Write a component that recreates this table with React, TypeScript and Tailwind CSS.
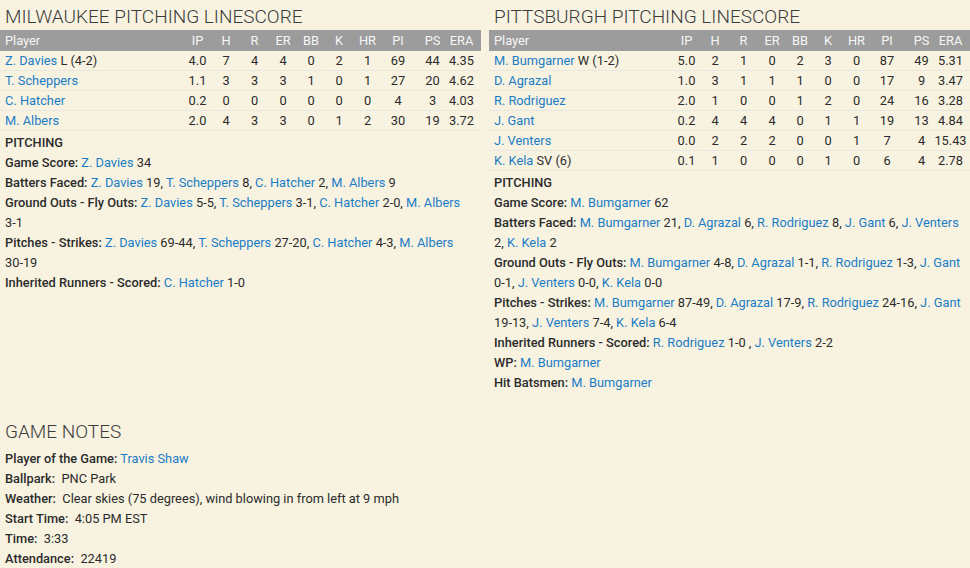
// Box score: pitching linescores + game notes
import React from "react";

type Pitcher = { name: string; note?: string; stats: string[] };
type Item = [string, string];

const COLS = ["IP", "H", "R", "ER", "BB", "K", "HR", "PI", "PS", "ERA"];
const GRID = "grid grid-cols-[183px_29px_28px_29px_28px_28px_28px_29px_32px_37px_21px]";

const MIL: Pitcher[] = [
  { name: "Z. Davies", note: "L (4-2)", stats: ["4.0", "7", "4", "4", "0", "2", "1", "69", "44", "4.35"] },
  { name: "T. Scheppers", stats: ["1.1", "3", "3", "3", "1", "0", "1", "27", "20", "4.62"] },
  { name: "C. Hatcher", stats: ["0.2", "0", "0", "0", "0", "0", "0", "4", "3", "4.03"] },
  { name: "M. Albers", stats: ["2.0", "4", "3", "3", "0", "1", "2", "30", "19", "3.72"] },
];

const PIT: Pitcher[] = [
  { name: "M. Bumgarner", note: "W (1-2)", stats: ["5.0", "2", "1", "0", "2", "3", "0", "87", "49", "5.31"] },
  { name: "D. Agrazal", stats: ["1.0", "3", "1", "1", "1", "0", "0", "17", "9", "3.47"] },
  { name: "R. Rodriguez", stats: ["2.0", "1", "0", "0", "1", "2", "0", "24", "16", "3.28"] },
  { name: "J. Gant", stats: ["0.2", "4", "4", "4", "0", "1", "1", "19", "13", "4.84"] },
  { name: "J. Venters", stats: ["0.0", "2", "2", "2", "0", "0", "1", "7", "4", "15.43"] },
  { name: "K. Kela", note: "SV (6)", stats: ["0.1", "1", "0", "0", "0", "1", "0", "6", "4", "2.78"] },
];

const MIL_NOTES: [string, Item[], string?][] = [
  ["Game Score:", [["Z. Davies", "34"]]],
  ["Batters Faced:", [["Z. Davies", "19"], ["T. Scheppers", "8"], ["C. Hatcher", "2"], ["M. Albers", "9"]]],
  ["Ground Outs - Fly Outs:", [["Z. Davies", "5-5"], ["T. Scheppers", "3-1"], ["C. Hatcher", "2-0"], ["M. Albers", "3-1"]]],
  ["Pitches - Strikes:", [["Z. Davies", "69-44"], ["T. Scheppers", "27-20"], ["C. Hatcher", "4-3"], ["M. Albers", "30-19"]]],
  ["Inherited Runners - Scored:", [["C. Hatcher", "1-0"]]],
];

const PIT_NOTES: [string, Item[], string?][] = [
  ["Game Score:", [["M. Bumgarner", "62"]]],
  ["Batters Faced:", [["M. Bumgarner", "21"], ["D. Agrazal", "6"], ["R. Rodriguez", "8"], ["J. Gant", "6"], ["J. Venters", "2"], ["K. Kela", "2"]]],
  ["Ground Outs - Fly Outs:", [["M. Bumgarner", "4-8"], ["D. Agrazal", "1-1"], ["R. Rodriguez", "1-3"], ["J. Gant", "0-1"], ["J. Venters", "0-0"], ["K. Kela", "0-0"]]],
  ["Pitches - Strikes:", [["M. Bumgarner", "87-49"], ["D. Agrazal", "17-9"], ["R. Rodriguez", "24-16"], ["J. Gant", "19-13"], ["J. Venters", "7-4"], ["K. Kela", "6-4"]]],
  ["Inherited Runners - Scored:", [["R. Rodriguez", "1-0"], ["J. Venters", "2-2"]], " , "],
  ["WP:", [["M. Bumgarner", ""]]],
  ["Hit Batsmen:", [["M. Bumgarner", ""]]],
];

function A({ children }: { children: React.ReactNode }) {
  return <a href="#" className="text-[#1b7cc6]">{children}</a>;
}

function Title({ children }: { children: React.ReactNode }) {
  return (
    <h2 className="pl-[5px] text-[19px] leading-[21px] font-light text-[#3c3c3c]">{children}</h2>
  );
}

function Linescore({ title, rows }: { title: string; rows: Pitcher[] }) {
  return (
    <div>
      <div className="pt-[6px] mb-[3px]">
        <Title>{title}</Title>
      </div>
      {/* header bar */}
      <div className={`${GRID} h-[21px] items-center bg-[#9c9c9c] text-[#f6f6f6]`}>
        <div className="pl-[5px]">Player</div>
        {COLS.map((c) => (
          <div key={c} className="flex justify-center">{c}</div>
        ))}
      </div>
      {rows.map((p) => (
        <div key={p.name} className={`${GRID} h-[20px] items-center border-b border-[#e9e8e0]`}>
          <div className="pl-[5px] whitespace-nowrap">
            <A>{p.name}</A>
            {p.note && <span> {p.note}</span>}
          </div>
          {p.stats.map((s, i) => (
            <div key={i} className="flex justify-center whitespace-nowrap">{s}</div>
          ))}
        </div>
      ))}
    </div>
  );
}

function Notes({ lines }: { lines: [string, Item[], string?][] }) {
  return (
    <div className="mt-[2px] px-[5px]">
      <p className="font-medium">PITCHING</p>
      {lines.map(([label, items, sep]) => (
        <p key={label}>
          <b className="font-medium">{label}</b>{" "}
          {items.map(([name, val], i) => (
            <React.Fragment key={name}>
              <A>{name}</A>
              {val && " "}
              <span className="whitespace-nowrap">
                {val}
                {i < items.length - 1 && (sep ?? ",").trimEnd()}
              </span>
              {i < items.length - 1 && " "}
            </React.Fragment>
          ))}
        </p>
      ))}
    </div>
  );
}

export default function App() {
  return (
    <div className="min-h-[568px] w-[970px] bg-[#f8f3e1] text-[12.8px] leading-[20px] text-[#2b2b2b] font-['Roboto',sans-serif]">
      <div className="flex items-start gap-[8px]">
        <div className="w-[481px]">
          <Linescore title="MILWAUKEE PITCHING LINESCORE" rows={MIL} />
          <Notes lines={MIL_NOTES} />
        </div>
        <div className="w-[481px]">
          <Linescore title="PITTSBURGH PITCHING LINESCORE" rows={PIT} />
          <Notes lines={PIT_NOTES} />
        </div>
      </div>

      {/* game notes */}
      <div className="mt-[28px] w-[481px]">
        <div className="mb-[7px]">
          <Title>GAME NOTES</Title>
        </div>
        <div className="px-[5px]">
          <p><b className="font-medium">Player of the Game:</b> <A>Travis Shaw</A></p>
          <p><b className="font-medium">Ballpark:</b>&nbsp; PNC Park</p>
          <p><b className="font-medium">Weather:</b>&nbsp; Clear skies (75 degrees), wind blowing in from left at 9 mph</p>
          <p><b className="font-medium">Start Time:</b>&nbsp; 4:05 PM EST</p>
          <p><b className="font-medium">Time:</b>&nbsp; 3:33</p>
          <p><b className="font-medium">Attendance:</b>&nbsp; 22419</p>
        </div>
      </div>
    </div>
  );
}
